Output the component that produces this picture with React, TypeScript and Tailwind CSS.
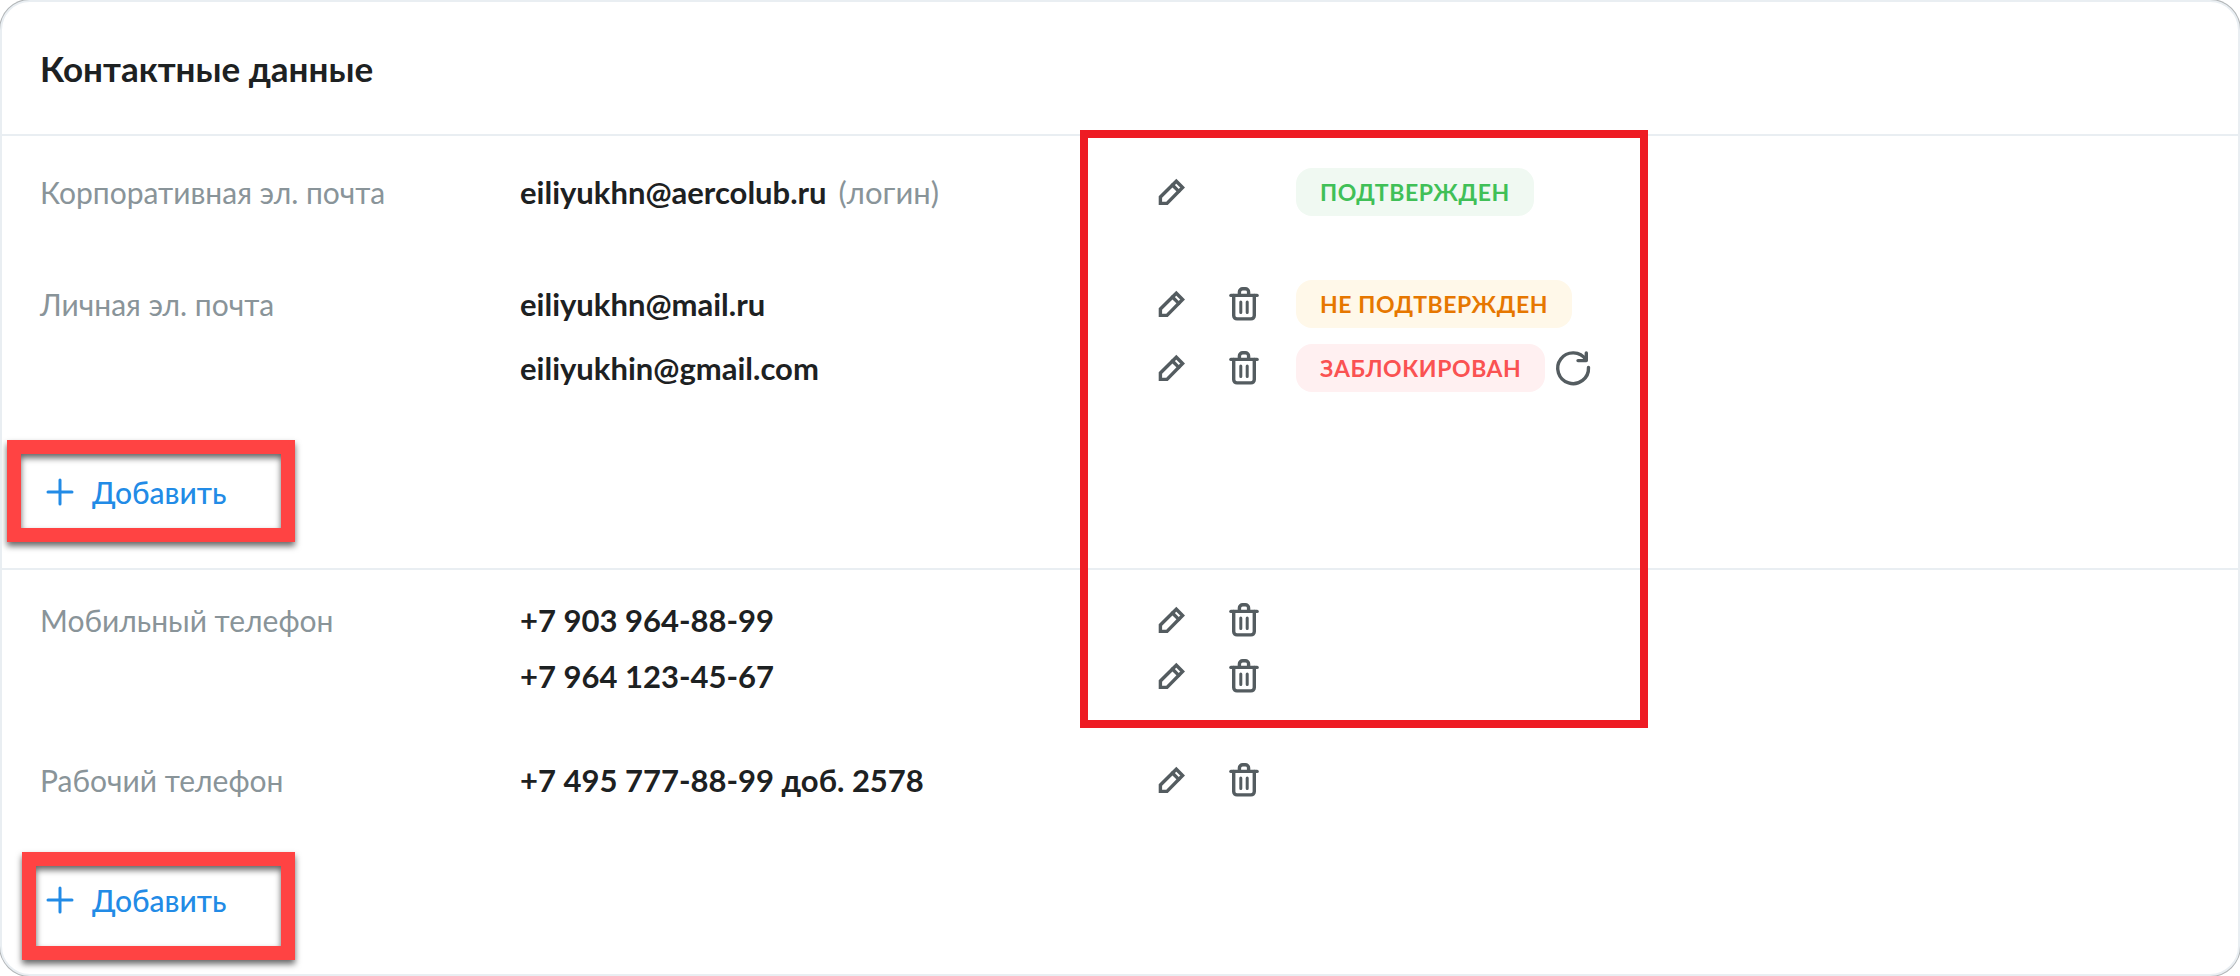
import React from 'react';

type Status = 'confirmed' | 'unconfirmed' | 'blocked';

interface Contact {
  value: string;
  note?: string;
  removable?: boolean;
  status?: Status;
}

interface ContactGroup {
  label: string;
  items: Contact[];
}

const emails: ContactGroup[] = [
  {
    label: 'Корпоративная эл. почта',
    items: [{ value: 'eiliyukhn@aercolub.ru', note: '(логин)', status: 'confirmed' }],
  },
  {
    label: 'Личная эл. почта',
    items: [
      { value: 'eiliyukhn@mail.ru', removable: true, status: 'unconfirmed' },
      { value: 'eiliyukhin@gmail.com', removable: true, status: 'blocked' },
    ],
  },
];

const phones: ContactGroup[] = [
  {
    label: 'Мобильный телефон',
    items: [
      { value: '+7 903 964-88-99', removable: true },
      { value: '+7 964 123-45-67', removable: true },
    ],
  },
  {
    label: 'Рабочий телефон',
    items: [{ value: '+7 495 777-88-99 доб. 2578', removable: true }],
  },
];

const statusLabels: Record<Status, string> = {
  confirmed: 'ПОДТВЕРЖДЕН',
  unconfirmed: 'НЕ ПОДТВЕРЖДЕН',
  blocked: 'ЗАБЛОКИРОВАН',
};

const statusStyles: Record<Status, string> = {
  confirmed: 'bg-[#f0f9f2] text-[#40c057]',
  unconfirmed: 'bg-[#fff8e9] text-[#e67700]',
  blocked: 'bg-[#fff0f1] text-[#fa5252]',
};

const iconProps = {
  viewBox: '0 0 40 40',
  fill: 'none',
  stroke: 'currentColor',
  strokeWidth: 3.4,
  strokeLinecap: 'round' as const,
  strokeLinejoin: 'round' as const,
  className: 'h-10 w-10',
};

function PencilIcon() {
  return (
    <svg {...iconProps} strokeLinejoin="miter">
      <path d="M8.4 31.4V25L24.3 9.2L30.6 15.5L15 31.4Z" />
      <path d="M20.4 13L26.8 19.4" />
    </svg>
  );
}

function TrashIcon() {
  return (
    <svg {...iconProps}>
      <path d="M6.9 11.4H33.1" />
      <path d="M15.4 11V8a3.3 3.3 0 0 1 3.3-3.3h2.6A3.3 3.3 0 0 1 24.6 8V11" />
      <path d="M9.7 11.5V31.6a3.3 3.3 0 0 0 3.3 3.3H27a3.3 3.3 0 0 0 3.3-3.3V11.5" />
      <path d="M16.8 18V28.6M23.2 18V28.6" strokeWidth={3} />
    </svg>
  );
}

function RefreshIcon() {
  return (
    <svg {...iconProps}>
      <path d="M35.5 19.5A15.4 15.4 0 1 1 33 11.8" />
      <path d="M33.3 5V12.6H25" />
    </svg>
  );
}

function ContactRow({ contact }: { contact: Contact }) {
  return (
    <li className="flex min-h-12 items-center">
      <div className="w-[632px] font-bold text-[#1d2122]">
        {contact.value}
        {contact.note && <span className="ml-3 font-normal text-[#899499]">{contact.note}</span>}
      </div>
      <div className="flex items-center gap-8 text-[#545c60]">
        <button type="button" aria-label="Изменить" className="cursor-pointer">
          <PencilIcon />
        </button>
        {contact.removable ? (
          <button type="button" aria-label="Удалить" className="cursor-pointer">
            <TrashIcon />
          </button>
        ) : (
          <span className="w-10" />
        )}
        {contact.status && (
          <div className="flex items-center gap-2">
            <span className={`rounded-2xl px-6 text-[23px] leading-12 font-bold tracking-wide ${statusStyles[contact.status]}`}>
              {statusLabels[contact.status]}
            </span>
            {contact.status === 'blocked' && (
              <button type="button" aria-label="Обновить" className="cursor-pointer">
                <RefreshIcon />
              </button>
            )}
          </div>
        )}
      </div>
    </li>
  );
}

function Group({ group, listClass }: { group: ContactGroup; listClass: string }) {
  return (
    <div className="flex items-start">
      <h3 className="w-[480px] shrink-0 text-[30px] leading-12 text-[#899499]">{group.label}</h3>
      <ul className={`flex flex-col ${listClass}`}>
        {group.items.map((item) => (
          <ContactRow key={item.value} contact={item} />
        ))}
      </ul>
    </div>
  );
}

function AddButton({ frameClass }: { frameClass: string }) {
  return (
    <div className="relative w-fit">
      <button type="button" className="flex h-12 cursor-pointer items-center gap-3 text-[30px] text-[#228be6]">
        <svg {...iconProps} strokeWidth={3}>
          <path d="M20 8V32M8 20H32" />
        </svg>
        <span className="font-medium">Добавить</span>
      </button>
      {/* Highlight frame */}
      <div
        className={`pointer-events-none absolute border-14 border-[#ff4343] drop-shadow-[0_4px_3px_rgba(0,0,0,0.6)] ${frameClass}`}
      />
    </div>
  );
}

function App() {
  return (
    <main className="relative min-h-screen overflow-hidden rounded-[30px] border-2 border-[#e9eef2] bg-white font-['Lato','Noto_Sans',sans-serif] text-[31px] leading-12 shadow-[0_0_0_1px_#b0b4b6]">
      {/* Header */}
      <header className="border-b-2 border-[#e9eef2] px-[38px] pt-[42px] pb-[42px]">
        <h2 className="text-[35px] font-bold text-[#1d2122]">Контактные данные</h2>
      </header>

      {/* Emails */}
      <section className="border-b-2 border-[#e9eef2] px-[38px] pt-8 pb-[52px]">
        <div className="mb-[76px] flex flex-col gap-16">
          {emails.map((group) => (
            <Group key={group.label} group={group} listClass="gap-4" />
          ))}
        </div>
        <AddButton frameClass="-top-7 -bottom-[26px] -left-[33px] w-72" />
      </section>

      {/* Phones */}
      <section className="px-[38px] pt-[26px] pb-[50px]">
        <div className="mb-[72px] flex flex-col gap-14">
          {phones.map((group) => (
            <Group key={group.label} group={group} listClass="gap-2" />
          ))}
        </div>
        <AddButton frameClass="-top-6 -bottom-9 -left-[18px] w-[273px]" />
      </section>

      {/* Highlight over the actions column */}
      <div className="pointer-events-none absolute top-32 left-[1078px] h-[598px] w-[568px] border-8 border-[#ee1c24]" />
    </main>
  );
}

export default App;
